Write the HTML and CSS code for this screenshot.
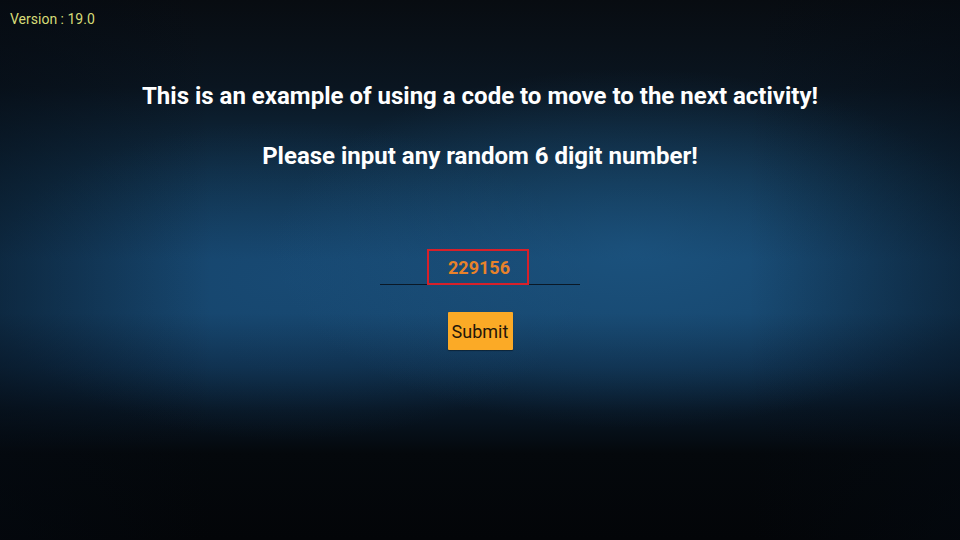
FILE: index.html
```html
<!DOCTYPE html>
<html>
<head>
<meta charset="utf-8">
<link rel="stylesheet" href="styles.css">
</head>
<body>
<div class="screen">
  <div class="version">Version : 19.0</div>
  <h1 class="title">This is an example of using a code to move to the next activity!</h1>
  <h2 class="subtitle">Please input any random 6 digit number!</h2>
  <div class="field">
    <div class="code-box">229156</div>
  </div>
  <button class="submit">Submit</button>
</div>
</body>
</html>
```
FILE: styles.css
```css
html, body {
  margin: 0;
  padding: 0;
  width: 960px;
  height: 540px;
  overflow: hidden;
}
.screen {
  width: 960px;
  height: 540px;
  box-sizing: border-box;
  display: flex;
  flex-direction: column;
  align-items: center;
  font-family: Roboto, "Liberation Sans", sans-serif;
  background:
    linear-gradient(to right, rgba(4, 10, 18, 0.45) 0%, rgba(4, 10, 18, 0) 22%, rgba(4, 10, 18, 0) 78%, rgba(4, 10, 18, 0.45) 100%),
    radial-gradient(ellipse 360px 180px at 66% 46%, rgba(34, 100, 150, 0.45), rgba(34, 100, 150, 0) 100%),
    radial-gradient(ellipse 300px 160px at 30% 52%, rgba(30, 90, 140, 0.3), rgba(30, 90, 140, 0) 100%),
    linear-gradient(to bottom, #080c11 0%, #0a1520 16%, #10304a 34%, #154268 48%, #154268 58%, #0e2c48 68%, #081624 76%, #04080c 84%, #030508 100%);
}
.version {
  align-self: flex-start;
  color: #d6dc78;
  font-size: 14px;
  margin: 11px 0 0 10px;
  line-height: 16px;
}
.title {
  margin: 55px 0 0 0;
  color: #ffffff;
  font-size: 24px;
  font-weight: 700;
  line-height: 28px;
}
.subtitle {
  margin: 32px 0 0 0;
  color: #ffffff;
  font-size: 24px;
  font-weight: 700;
  line-height: 28px;
}
.field {
  margin-top: 79px;
  width: 200px;
  height: 35px;
  border-bottom: 1px solid #0a1826;
  display: flex;
  justify-content: center;
}
.code-box {
  width: 95px;
  height: 32px;
  margin-right: 5px;
  border: 2px solid #d8202a;
  color: #e8822a;
  font-size: 18px;
  font-weight: 700;
  display: flex;
  align-items: center;
  justify-content: center;
  padding-left: 3px;
  box-sizing: content-box;
}
.submit {
  margin-top: 27px;
  width: 65px;
  height: 38px;
  border: none;
  border-radius: 1px;
  background: #fbaa26;
  color: #24160a;
  font-family: Roboto, "Liberation Sans", sans-serif;
  font-size: 18px;
  padding: 0;
  box-shadow: 0 1px 1px rgba(0,0,0,0.4);
}
```
